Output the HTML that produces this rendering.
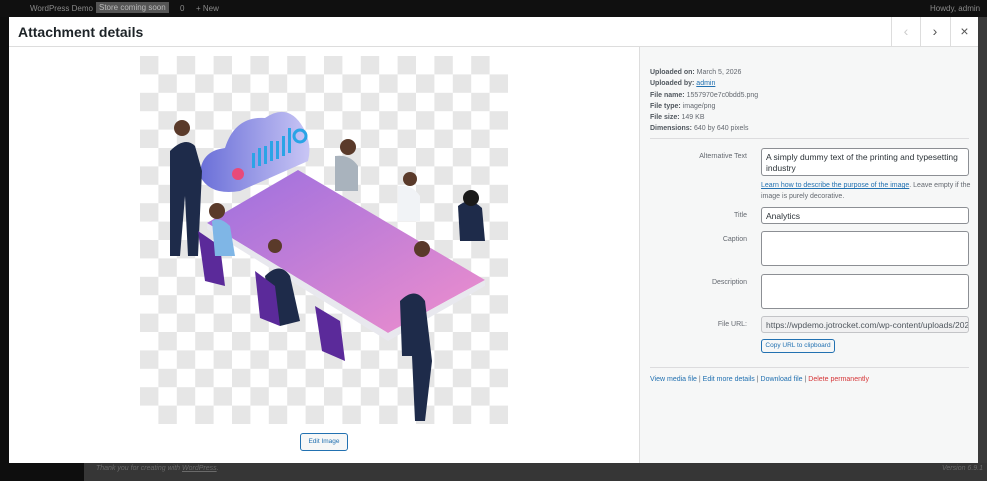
<!DOCTYPE html>
<html><head><meta charset="utf-8"><style>
*{margin:0;padding:0;box-sizing:border-box}
body{width:987px;height:481px;overflow:hidden;background:#3a3a3a;font-family:"Liberation Sans",sans-serif;position:relative}
.topbar{position:absolute;left:0;top:0;width:987px;height:17px;background:#101010;color:#8a8a8a;font-size:8px}
.topbar span{position:absolute;top:4px}
.side{position:absolute;left:0;top:17px;width:84px;height:464px;background:#0e0e0e}
.foot{position:absolute;left:84px;top:463px;width:903px;height:18px;background:#363636;color:#6a6a6a;font-size:7px;font-style:italic}
.modal{position:absolute;left:9px;top:17px;width:969px;height:446px;background:#fff}
.hdr{height:30px;border-bottom:1px solid #ddd;position:relative}
.hdr h1{font-size:14px;font-weight:bold;color:#1d2327;position:absolute;left:9px;top:7px}
.nb{position:absolute;top:0;width:29px;height:30px;border-left:1px solid #ddd;color:#888;font-size:14px;text-align:center;line-height:29px}
.left{position:absolute;left:0;top:30px;width:630px;height:416px}
.right{position:absolute;left:630px;top:30px;width:339px;height:416px;background:#f6f7f7;border-left:1px solid #ddd;font-size:7px;color:#646970}
.meta{position:absolute;left:10px;top:20px;line-height:11.3px}
.meta b{color:#50575e}
a{color:#2271b1}
.lbl{position:absolute;width:107px;text-align:right;font-size:7px;color:#646970}
.inp{position:absolute;left:121px;width:208px;background:#fff;border:1px solid #8c8f94;border-radius:3px;font-size:8.5px;color:#2c3338;padding:3px 4px;line-height:11px}
.hr{position:absolute;left:10px;width:319px;border-top:1px solid #dcdcde}
.btn{position:absolute;border:1px solid #2271b1;border-radius:3px;background:#f6f7f7;color:#2271b1;font-size:6.5px;text-align:center}
</style></head><body>
<div class="topbar"><span style="left:30px">WordPress Demo</span><span style="left:96px;top:2px;background:#555;color:#bbb;padding:1px 3px">Store coming soon</span><span style="left:180px">0</span><span style="left:196px">+ New</span><span style="left:930px">Howdy, admin</span></div>
<div class="side"></div>
<div class="foot"><span style="position:absolute;left:12px;top:2px">Thank you for creating with <u>WordPress</u>.</span><span style="position:absolute;right:4px;top:2px">Version 6.9.1</span></div>
<div class="modal">
<div class="hdr"><h1>Attachment details</h1>
<div class="nb" style="left:882px;color:#ccc">&#8249;</div><div class="nb" style="left:911px;color:#555">&#8250;</div><div class="nb" style="left:941px;color:#555;width:28px">&#215;</div></div>
<div class="left">
<svg style="position:absolute;left:131px;top:9px" width="368" height="368" viewBox="0 0 368 368">
<defs><pattern id="ck" width="36.8" height="36.8" patternUnits="userSpaceOnUse"><rect width="36.8" height="36.8" fill="#fff"/><rect width="18.4" height="18.4" fill="#e6e6e6"/><rect x="18.4" y="18.4" width="18.4" height="18.4" fill="#e6e6e6"/></pattern>
<linearGradient id="tb" x1="0" y1="0" x2="1" y2="1"><stop offset="0" stop-color="#9b6fe0"/><stop offset="1" stop-color="#f08fcc"/></linearGradient>
<linearGradient id="cl" x1="0" y1="0" x2="1" y2="0"><stop offset="0" stop-color="#6a6fd8"/><stop offset="1" stop-color="#c9c6f5"/></linearGradient></defs>
<rect width="368" height="368" fill="url(#ck)"/>
<path d="M60 120 Q60 95 85 92 Q95 60 125 62 Q150 45 165 75 Q172 90 168 105 L100 135 Q70 140 60 120Z" fill="url(#cl)"/>
<g fill="#2aa4e6"><rect x="112" y="97" width="3" height="15"/><rect x="118" y="92" width="3" height="18"/><rect x="124" y="90" width="3" height="18"/><rect x="130" y="85" width="3" height="20"/><rect x="136" y="85" width="3" height="18"/><rect x="142" y="80" width="3" height="20"/><rect x="148" y="72" width="3" height="25"/></g>
<circle cx="98" cy="118" r="6" fill="#e84a7a"/><circle cx="160" cy="80" r="6" fill="none" stroke="#2aa4e6" stroke-width="3"/>
<path d="M67 167 L158 114 L345 224 L248 277Z" fill="url(#tb)"/>
<path d="M67 167 L248 277 L345 224 L345 230 L248 285 L67 173Z" fill="#e8e8ee"/>
<g fill="#1e2b4a">
<path d="M30 95 Q45 80 55 90 L62 115 L58 200 L48 200 L45 140 L40 200 L30 200Z"/>
<path d="M260 245 Q275 230 285 245 L292 305 L285 365 L275 365 L272 300 L262 300Z"/>
<path d="M125 220 Q140 205 150 220 L160 265 L140 270 L130 255Z"/>
<path d="M318 150 Q330 140 342 152 L345 185 L320 185Z"/>
</g>
<g fill="#5b2a9a"><path d="M58 175 L80 190 L85 230 L65 225Z"/><path d="M115 215 L135 230 L140 270 L120 262Z"/><path d="M175 250 L200 265 L205 305 L182 295Z"/></g>
<g fill="#5a3a2a"><circle cx="42" cy="72" r="8"/><circle cx="77" cy="155" r="8"/><circle cx="135" cy="190" r="7"/><circle cx="208" cy="91" r="8"/><circle cx="270" cy="123" r="7"/><circle cx="282" cy="193" r="8"/></g>
<circle cx="331" cy="142" r="8" fill="#1a1a1a"/>
<path d="M72 165 Q80 160 90 170 L95 200 L75 200Z" fill="#7fb6e6"/>
<path d="M195 100 Q210 98 218 110 L218 135 L195 135Z" fill="#a9b3bd"/>
<path d="M258 130 Q272 128 280 140 L280 165 L258 165Z" fill="#f1f3f6"/>
</svg>
<div class="btn" style="left:291px;top:386px;width:48px;height:18px;line-height:16px">Edit Image</div>
</div>
<div class="right">
<div class="meta"><b>Uploaded on:</b> March 5, 2026<br><b>Uploaded by:</b> <a style="text-decoration:underline">admin</a><br><b>File name:</b> 1557970e7c0bdd5.png<br><b>File type:</b> image/png<br><b>File size:</b> 149 KB<br><b>Dimensions:</b> 640 by 640 pixels</div>
<div class="hr" style="top:91px"></div>
<div class="lbl" style="top:106px">Alternative Text</div>
<div class="inp" style="top:101px;height:28px">A simply dummy text of the printing and typesetting industry</div>
<div style="position:absolute;left:121px;top:134px;width:212px;line-height:10.5px"><a style="text-decoration:underline">Learn how to describe the purpose of the image</a>. Leave empty if the image is purely decorative.</div>
<div class="lbl" style="top:165px">Title</div>
<div class="inp" style="top:160px;height:17px">Analytics</div>
<div class="lbl" style="top:189px">Caption</div>
<div class="inp" style="top:184px;height:35px"></div>
<div class="lbl" style="top:232px">Description</div>
<div class="inp" style="top:227px;height:35px"></div>
<div class="lbl" style="top:274px">File URL:</div>
<div class="inp" style="top:269px;height:17px;background:#f0f0f1;border-color:#c3c4c7;color:#50575e;white-space:nowrap;overflow:hidden">https://wpdemo.jotrocket.com/wp-content/uploads/2026</div>
<div class="btn" style="left:121px;top:292px;width:74px;height:14px;line-height:12px">Copy URL to clipboard</div>
<div class="hr" style="top:320px"></div>
<div style="position:absolute;left:10px;top:329px"><a>View media file</a> | <a>Edit more details</a> | <a>Download file</a> | <a style="color:#d63638">Delete permanently</a></div>
</div>
</div>
</body></html>
